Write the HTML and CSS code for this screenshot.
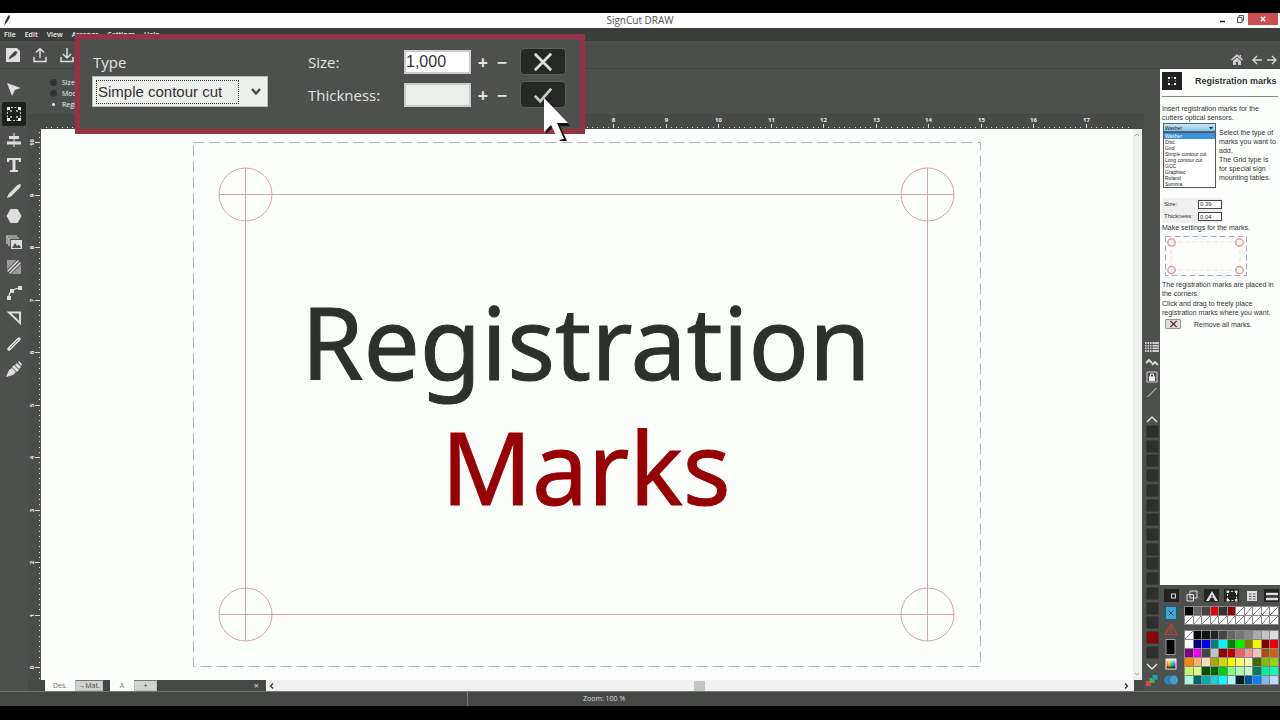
FILE: index.html
```html
<!DOCTYPE html>
<html lang="en">
<head>
<meta charset="utf-8">
<title>SignCut DRAW</title>
<link rel="stylesheet" href="styles.css">
</head>
<body>
<div class="app">
  <header class="titlebar">
    <svg class="logo" viewBox="0 0 10 12"><path d="M2 12L3 7L6 1L8 0L8 3L5 8L3 10Z" fill="#333"/></svg>
    <h1 class="title">SignCut DRAW</h1>
    <div class="window-buttons">
      <button class="win" aria-label="Minimize"><svg viewBox="0 0 10 10"><path d="M2 7.500H7" stroke="#222" stroke-width="1.500"/></svg></button>
      <button class="win" aria-label="Restore"><svg viewBox="0 0 10 10"><path d="M2.500 3.500H7V8.500H2.500ZM4 3.500V1.500H8.500V6.500H7" fill="none" stroke="#555"/></svg></button>
      <button class="win close" aria-label="Close"><svg viewBox="0 0 10 10"><path d="M2.800 2.800L7.200 7.200M7.200 2.800L2.800 7.200" stroke="#fff" stroke-width="1.300"/></svg></button>
    </div>
  </header>

  <nav class="menubar">
    <button>File</button><button>Edit</button><button>View</button><button>Arrange</button><button>Settings</button><button>Help</button>
  </nav>

  <div class="toolbar">
    <button aria-label="New"><svg viewBox="0 0 16 16"><path d="M1 1H12L15 4V15H1Z" fill="#ddd"/><path d="M3.500 12.500L5 9L10 4L12.500 5L11 8L6.500 11Z" fill="#444"/></svg></button>
    <button aria-label="Open"><svg viewBox="0 0 16 16"><path d="M2 10V14.500H14V10M8 11V1.500M4 5.500L8 1.500L12 5.500" fill="none" stroke="#ddd" stroke-width="1.500"/></svg></button>
    <button aria-label="Save"><svg viewBox="0 0 16 16"><path d="M2 10V14.500H14V10M8 1V11M4 7L8 11L12 7" fill="none" stroke="#ddd" stroke-width="1.500"/></svg></button>
    <div class="help-nav">
      <button aria-label="Home"><svg viewBox="0 0 12 12"><path d="M6 0L12 5.500L11 6.500L6 2.500L1 6.500L0 5.500ZM6 3.500L10 7V11H7V8H5V11H2V7ZM8.500 1H10V3.500L8.500 2Z" fill="#ccc"/></svg></button>
      <button aria-label="Back"><svg viewBox="0 0 12 12"><path d="M11 6H2M6 2L2 6L6 10" fill="none" stroke="#d5d5d5" stroke-width="1.400"/></svg></button>
      <button aria-label="Forward"><svg viewBox="0 0 12 12"><path d="M1 6H10M6 2L10 6L6 10" fill="none" stroke="#d5d5d5" stroke-width="1.400"/></svg></button>
    </div>
  </div>

  <main class="main">
    <div class="tools">
      <button aria-label="Select"><svg viewBox="0 0 16 16"><path d="M1 2L15 7L9 9L6 15Z" fill="#ddd"/></svg></button>
      <button class="active" aria-label="Registration marks"><svg viewBox="0 0 16 16"><rect x="1.500" y="1.500" width="13" height="13" fill="none" stroke="#ccc" stroke-dasharray="2 1.500"/><path d="M1 1H4V4H1ZM12 1H15V4H12ZM1 12H4V15H1ZM12 12H15V15H12Z" fill="#eee"/><path d="M4 4H6V6H4ZM10 4H12V6H10ZM4 10H6V12H4ZM10 10H12V12H10Z" fill="#999"/></svg></button>
      <button aria-label="Align"><svg viewBox="0 0 16 16"><path d="M3 4H13V7H3ZM1 9.500H15V12.500H1ZM7.500 1H8.500V15H7.500Z" fill="#ddd"/></svg></button>
      <button aria-label="Text"><svg viewBox="0 0 16 16"><path d="M1 1H15V5H13L12.500 3H9.500V13H12V15H4V13H6.500V3H3.500L3 5H1Z" fill="#ddd"/></svg></button>
      <button aria-label="Pencil"><svg viewBox="0 0 16 16"><path d="M1 15L2.500 11L11.500 2L14 1L15 2L14 4.500L5 13.500Z" fill="#ddd"/></svg></button>
      <button aria-label="Shape"><svg viewBox="0 0 16 16"><path d="M4.500 1H11.500L15.500 8L11.500 15H4.500L.5 8Z" fill="#ddd"/></svg></button>
      <button aria-label="Image"><svg viewBox="0 0 16 16"><path d="M1 10V2H11M3 12V4H13" fill="none" stroke="#ddd" stroke-width="1.200"/><rect x="5" y="6" width="11" height="9" fill="#ddd"/><path d="M6 14L9 9L11 12L13 10.500L15 14Z" fill="#4e504e"/></svg></button>
      <button aria-label="Fill"><svg viewBox="0 0 16 16"><path d="M1 1H13L1 13ZM15 3V15H3Z" fill="#999"/><path d="M2 14L14 2" stroke="#4e504e" stroke-width="6"/><path d="M2 12L12 2M4 14L14 4" stroke="#ddd" stroke-width="1.500" stroke-linecap="round"/></svg></button>
      <button aria-label="Nodes"><svg viewBox="0 0 16 16"><path d="M2.500 13Q3 4 14 3" fill="none" stroke="#ddd" stroke-width="1.200"/><path d="M1 11H5V15H1ZM4 4H8V8H4ZM12 1H16V5H12Z" fill="#ddd"/></svg></button>
      <button aria-label="Set square"><svg viewBox="0 0 16 16"><path d="M3 2.500H14V13Z" fill="none" stroke="#ddd" stroke-width="2"/></svg></button>
      <button aria-label="Line"><svg viewBox="0 0 16 16"><path d="M3 13L13 3" stroke="#ddd" stroke-width="3.500" stroke-linecap="round"/><path d="M4 12L12 4" stroke="#777"/></svg></button>
      <button aria-label="Eyedropper"><svg viewBox="0 0 16 16"><path d="M0 16L3 9L6 7L10 11L7 14ZM6 6L8 4L13 9L11 11ZM9 4L11 2L15 6L13 8ZM12 1L13 0L16 3L15 5Z" fill="#ddd"/></svg></button>
    </div>

    <section class="center">
      <fieldset class="options">
        <label><input type="radio" name="mode">Size</label>
        <label><input type="radio" name="mode">Mode</label>
        <label><input type="radio" name="mode" checked>Registration</label>
      </fieldset>
      <svg class="ruler-top" id="ruler-top"></svg>
      <div class="workspace">
        <svg class="ruler-left" id="ruler-left"></svg>
        <svg class="canvas">
          <rect class="page" x="152.500" y="13.500" width="787" height="524"/>
          <g class="marks">
            <path d="M178 65.500H913M178 485.500H913M204.500 39V512M886.500 39V512"/>
            <circle cx="204.500" cy="65.500" r="26.500"/><circle cx="886.500" cy="65.500" r="26.500"/>
            <circle cx="204.500" cy="485.500" r="26.500"/><circle cx="886.500" cy="485.500" r="26.500"/>
          </g>
          <text class="art"><tspan x="545" y="251">Registration</tspan><tspan class="red" x="545" y="376">Marks</tspan></text>
        </svg>
        <div class="vscroll"><svg viewBox="0 0 8 8"><path d="M2 5L4 3L6 5" fill="none" stroke="#aaa"/></svg><svg viewBox="0 0 8 8"><path d="M2 3L4 5L6 3" fill="none" stroke="#aaa"/></svg></div>
      </div>
      <div class="tabs">
        <button class="tab">Des.</button><button class="tab grey">→Mat.</button>
        <button class="tab sheet">A</button><button class="tab grey add">+</button>
        <button class="tab-close" aria-label="Close sheet">×</button>
        <div class="hscroll"><svg viewBox="0 0 8 8"><path d="M5 1.500L2.500 4L5 6.500" fill="none" stroke="#333" stroke-width="1.300"/></svg><span class="thumb"></span><svg viewBox="0 0 8 8"><path d="M3 1.500L5.500 4L3 6.500" fill="none" stroke="#333" stroke-width="1.300"/></svg></div>
      </div>
    </section>

    <aside class="strip">
      <div class="strip-icons">
        <svg viewBox="0 0 14 12"><path d="M0 1H14V11H0Z" fill="#ccc"/><path d="M0 3.500H14M0 6H14M0 8.500H14M2 1V11M4.500 1V11M7 1V11" stroke="#333" stroke-width=".7"/></svg>
        <svg viewBox="0 0 14 12"><path d="M1 7L4 4L7 7M7 9L10 6L13 9" fill="none" stroke="#ddd" stroke-width="1.800"/></svg>
        <svg viewBox="0 0 14 12"><rect x="2" y="1" width="10" height="10" fill="none" stroke="#ccc"/><path d="M4 5.500H10V10H4Z" fill="#eee"/><path d="M5.500 6V3H8.500V6" fill="none" stroke="#eee"/></svg>
        <svg viewBox="0 0 14 12"><path d="M2.500 11L11.500 2" stroke="#ddd"/></svg>
      </div>
      <svg class="chev" viewBox="0 0 14 10"><path d="M2 8L7 3L12 8" fill="none" stroke="#ddd" stroke-width="1.500"/></svg>
      <div class="layers" id="layers"></div>
      <svg class="chev" viewBox="0 0 14 10"><path d="M2 2L7 7L12 2" fill="none" stroke="#ddd" stroke-width="1.500"/></svg>
      <svg class="rgb" viewBox="0 0 14 14"><path d="M1 8H6V13H1Z" fill="#d64b3b"/><path d="M4.500 5H9.500V10H4.500Z" fill="#3fae55"/><path d="M7.500 2H12.500V7H7.500Z" fill="#2f9aa5"/></svg>
    </aside>

    <aside class="side">
      <article class="help">
        <header class="help-head">
          <svg viewBox="0 0 20 18"><path d="M0 0H20V18H0Z" fill="#222"/><path d="M6 5H8V7H6ZM12 5H14V7H12ZM6 11H8V13H6ZM12 11H14V13H12Z" fill="#eee"/><path d="M9 5.500H11M9 12.500H11M6.500 8V10M13.500 8V10" stroke="#666"/></svg>
          <h2>Registration marks</h2>
        </header>
        <p>Insert registration marks for the cutters optical sensors.</p>
        <div class="type-row">
          <div class="picker">
            <div class="picker-box">
              <select aria-label="Mark type"><option>Washer</option></select>
              <svg viewBox="0 0 6 6"><path d="M1 2H5L3 4.500Z" fill="#123"/></svg>
            </div>
            <ul><li class="on">Washer</li><li>Disc</li><li>Grid</li><li>Simple contour cut</li><li>Long contour cut</li><li>GCC</li><li>Graphtec</li><li>Roland</li><li>Summa</li></ul>
          </div>
          <p>Select the type of marks you want to add.<br>The Grid type is for special sign mounting tables.</p>
        </div>
        <div class="dims">
          <label for="hs">Size:</label><input id="hs" value="0.39">
          <label for="ht">Thickness:</label><input id="ht" value="0.04">
        </div>
        <p>Make settings for the marks.</p>
        <svg class="sketch" viewBox="0 0 84 42"><rect x="1.500" y="1.500" width="81" height="39" fill="none" stroke="#a5a5dc" stroke-dasharray="6 3"/><rect x="7" y="7" width="69" height="28" fill="none" stroke="#efe2e0" stroke-dasharray="5 2"/><g fill="none" stroke="#ec8b92" stroke-width="1.300"><circle cx="7.500" cy="7.500" r="3.700"/><circle cx="75.500" cy="7.500" r="3.700"/><circle cx="7.500" cy="35" r="3.700"/><circle cx="75.500" cy="35" r="3.700"/></g></svg>
        <p>The registration marks are placed in the corners.</p>
        <p class="drag">Click and drag to freely place registration marks where you want.</p>
        <div class="remove"><button aria-label="Remove"><svg viewBox="0 0 10 8"><path d="M1.500 .5L8.500 7.500M8.500 .5L1.500 7.500" stroke="#5a1020" stroke-width="1.300"/></svg></button><span>Remove all marks.</span></div>
      </article>

      <section class="palette">
        <div class="pal-head">
          <button class="dark" aria-label="Outline"><svg viewBox="0 0 14 12"><rect x="6.500" y="4" width="4" height="4" fill="none" stroke="#ddd"/></svg></button>
          <button aria-label="Overlap"><svg viewBox="0 0 14 12"><path d="M2 4.500H8.500V11H2ZM5 1H12V8H5Z" fill="none" stroke="#ddd"/></svg></button>
          <button class="dark" aria-label="Snap"><svg viewBox="0 0 14 12"><path d="M7 1L8.500 3.500L13 11H10L8.500 8H5.500L4 11H1L5.500 3.500Z" fill="#ddd"/><path d="M7 5V12" stroke="#222"/></svg></button>
          <button class="dark" aria-label="Marks"><svg viewBox="0 0 14 12"><rect x="2.500" y="1.500" width="9" height="9" fill="none" stroke="#ddd" stroke-dasharray="2 1.500"/><path d="M1.500 .5H4V3H1.500ZM10 .5H12.500V3H10ZM1.500 9H4V11.500H1.500ZM10 9H12.500V11.500H10Z" fill="#ddd"/></svg></button>
          <button aria-label="Grid"><svg viewBox="0 0 14 12"><path d="M2 1H12V11H2Z" fill="#ddd"/><path d="M4 4H6.500M8 4H10.500M4 6.500H6.500M8 6.500H10.500M4 9H6.500M8 9H10.500" stroke="#555"/></svg></button>
          <button class="dark" aria-label="Lines"><svg viewBox="0 0 14 12"><path d="M1 4H13M1 9H13" stroke="#ddd" stroke-width="2.500"/><path d="M2 7H13" stroke="#999" stroke-dasharray="1 2"/></svg></button>
        </div>
        <div class="pal-body">
          <div class="pal-tools">
            <svg viewBox="0 0 14 14"><path d="M0 0H14V14H0Z" fill="#245a70"/><path d="M2 1H12V13H2Z" fill="#3aa6cf"/><path d="M4.500 4.500L9.500 9.500M9.500 4.500L4.500 9.500" stroke="#17495c"/></svg>
            <svg viewBox="0 0 14 14"><path d="M7 2L13 12.500H1Z" fill="none" stroke="#c8402c" stroke-width="1.200"/><path d="M7 5V9M7 10V11.500" stroke="#c8402c"/></svg>
            <svg class="tall" viewBox="0 0 14 16"><rect x="2" y=".5" width="9" height="15" fill="#000" stroke="#999"/></svg>
            <svg viewBox="0 0 14 14"><defs><linearGradient id="hue"><stop offset="0" stop-color="#e33"/><stop offset=".3" stop-color="#ec3"/><stop offset=".55" stop-color="#3c4"/><stop offset=".8" stop-color="#38f"/><stop offset="1" stop-color="#c3c"/></linearGradient><linearGradient id="shade" x2="0" y2="1"><stop offset="0" stop-color="#fff"/><stop offset=".5" stop-color="#fff" stop-opacity="0"/><stop offset=".6" stop-color="#000" stop-opacity="0"/><stop offset="1" stop-color="#000"/></linearGradient></defs><rect x="2" y="2" width="10" height="10" fill="url(#hue)"/><rect x="2" y="2" width="10" height="10" fill="url(#shade)" stroke="#eee"/></svg>
            <svg viewBox="0 0 14 14"><ellipse cx="5" cy="7" rx="5" ry="4.500" fill="#2c7fae"/><ellipse cx="10" cy="7" rx="4" ry="4.500" fill="#439bcb"/></svg>
          </div>
          <div class="swatches">
            <div class="grid" id="recent"></div>
            <div class="grid" id="colors"></div>
          </div>
        </div>
      </section>
    </aside>
  </main>

  <footer class="status"><span class="status-left"></span><span>Zoom: 100 %</span></footer>

  <form class="popup">
    <div class="type">
      <label for="type">Type</label>
      <div class="combo">
        <select id="type"><option>Simple contour cut</option></select>
        <svg viewBox="0 0 12 10"><path d="M2 2L6 6.500L10 2" fill="none" stroke="#444" stroke-width="2.200"/></svg>
      </div>
    </div>
    <div class="fields">
      <label for="size">Size:</label><input id="size" value="1,000">
      <button type="button" class="step">+</button><button type="button" class="step">−</button>
      <button type="button" class="act" aria-label="Cancel"><svg viewBox="0 0 22 22"><path d="M2 2L20 20M20 2L2 20" stroke="#ddd" stroke-width="3"/></svg></button>
      <label for="thick">Thickness:</label><input id="thick" class="off" value="">
      <button type="button" class="step">+</button><button type="button" class="step">−</button>
      <button type="button" class="act" aria-label="Apply"><svg viewBox="0 0 22 22"><path d="M2 12L8 18L20 4" fill="none" stroke="#ccc" stroke-width="3"/></svg></button>
    </div>
  </form>
  <svg class="cursor" viewBox="0 0 28 46"><path d="M3 3V37L10 30L17 44H24L17 29H27Z" fill="#111"/><path d="M1 1V35L8 28L15 43L21 42L14 26H25Z" fill="#fff"/></svg>
</div>
<script src="app.js"></script>
</body>
</html>
```
FILE: styles.css
```css
* { box-sizing: border-box; }
body { margin: 0; background: #000; font-family: "Open Sans", "Noto Sans", sans-serif; color: #ddd; }
button { font: inherit; color: inherit; background: none; border: 0; padding: 0; display: flex; align-items: center; justify-content: center; }
svg { display: block; }
h1, h2, p, ul { margin: 0; padding: 0; font-weight: normal; }
ul { list-style: none; }

.app { position: relative; height: 100vh; min-height: 720px; padding: 13px 0 14px; display: flex; flex-direction: column; overflow: hidden; }

.titlebar { height: 15px; flex: none; background: #fcfcfc; display: grid; grid-template-columns: 1fr auto 1fr; align-items: center; }
.logo { width: 10px; height: 11px; margin-left: 2px; }
.title { font-size: 10px; line-height: 15px; color: #555; }
.window-buttons { display: flex; justify-content: flex-end; align-self: start; padding-right: 2px; }
.win { width: 17px; height: 12px; }
.win svg { width: 10px; height: 10px; }
.close { width: 30px; background: #c94f50; }

.menubar { height: 13px; flex: none; background: #3c3e3c; display: flex; gap: 9px; padding-left: 4px; font-size: 7px; font-weight: 600; color: #eee; }

.toolbar { height: 28px; flex: none; background: #4c4e4c; border-bottom: 1px solid #434543; display: flex; align-items: center; gap: 11px; padding: 1px 0 0 5px; }
.toolbar svg { width: 16px; height: 16px; }
.help-nav { margin-left: auto; align-self: end; display: flex; gap: 3px; padding: 0 2px 2px 0; }
.toolbar .help-nav svg { width: 12px; height: 12px; }
.help-nav button:first-child { margin-right: 5px; }

.main { flex: 1; min-height: 0; display: flex; background: #4e504e; }
.tools { width: 28px; height: 312px; flex: none; padding-top: 8px; display: flex; flex-direction: column; justify-content: space-between; }
.tools button { width: 24px; height: 24px; margin-left: 2px; border-radius: 2px; }
.tools .active { background: #1e201e; }
.tools svg { width: 16px; height: 16px; }

.center { flex: 1; min-width: 0; display: flex; flex-direction: column; }
.options { height: 46px; flex: none; margin: 0; border: 0; border-bottom: 1px solid #454745; padding: 8px 0 0 22px; font-size: 7px; line-height: 11px; color: #eee; }
.options label { display: flex; align-items: center; gap: 5px; height: 11px; }
.options input { appearance: none; width: 7px; height: 7px; margin: 0; border-radius: 50%; background: #333533; }
.options input:checked { background: #eee; border: 2px solid #4e504e; }
.ruler-top { width: 100%; height: 14px; flex: none; background: #484a48; }
.ruler-left { width: 13px; height: 100%; flex: none; background: #4b4d4b; }
.ruler-text { font-size: 6px; font-weight: 700; fill: #eee; text-anchor: middle; }
.ticks { stroke: #ddd; stroke-width: 1; }
.workspace { flex: 1; min-height: 0; display: flex; padding-right: 2px; }
.canvas { flex: 1; min-width: 0; height: 100%; background: #fcfefb; }
.page { fill: none; stroke: #b4b4c2; stroke-dasharray: 11 5; }
.marks { fill: none; stroke: #d6a5a0; stroke-width: 1; }
.art { font-family: "Noto Sans", sans-serif; font-size: 100px; text-anchor: middle; fill: #2e302e; stroke: #2e302e; stroke-width: 1; }
.art .red { fill: #950004; stroke: #950004; }
.vscroll { width: 9px; background: #ecefec; display: flex; flex-direction: column; justify-content: space-between; padding: 2px 0; }
.vscroll svg { width: 8px; height: 8px; }

.tabs { height: 11px; flex: none; display: flex; padding: 0 10px 0 17px; background: #464846; font-size: 7px; color: #777; }
.tab { width: 30px; background: #fcfefb; }
.tab.grey { width: 28px; background: #d2d4d2; border: 1px solid #bbb; border-top-color: #777; color: #444; }
.tab.sheet { width: 24px; margin-left: 7px; }
.tab.add { width: 23px; }
.tab-close { width: 109px; justify-content: flex-end; padding-right: 7px; color: #ddd; font-size: 9px; }
.hscroll { flex: 1; background: #f0f1f0; display: flex; align-items: center; justify-content: space-between; padding: 0 4px 0 2px; }
.hscroll svg { width: 8px; height: 8px; }
.thumb { width: 11px; height: 10px; background: #c4c6c4; }

.strip { width: 16px; flex: none; padding: 0 1px 4px; display: flex; flex-direction: column; align-items: center; justify-content: flex-end; }
.strip-icons { display: flex; flex-direction: column; gap: 3px; margin-bottom: 16px; }
.strip-icons svg { width: 14px; height: 12px; }
.chev { width: 14px; height: 10px; }
.layers { height: 234px; display: flex; flex-direction: column; justify-content: space-between; margin: 1px 0 3px; }
.layer { width: 13px; height: 13px; background: #2e302e; border: 1px solid #3a3c3a; border-radius: 2px; }
.layer.red { background: #8d0006; }
.rgb { width: 14px; height: 14px; margin-top: 1px; }

.side { width: 120px; flex: none; display: flex; flex-direction: column; }
.help { flex: 1; background: #fcfefb; color: #333; padding: 2px 0 0 2px; font: 7px/9px "Liberation Sans", sans-serif; }
.help-head { display: flex; align-items: center; gap: 13px; height: 26px; padding-bottom: 6px; border-bottom: 1px solid #888; margin: 0 2px 7px 0; }
.help-head svg { width: 20px; height: 18px; flex: none; }
.help-head h2 { font: bold 9px/12px "Liberation Sans", sans-serif; color: #333; white-space: nowrap; }
.type-row { display: flex; gap: 3px; height: 75px; margin-top: 1px; }
.type-row p { padding: 5px 4px 0 0; flex: 1; }
.picker { width: 54px; flex: none; font-size: 5px; line-height: 6px; color: #222; padding-left: 1px; }
.picker-box { display: flex; align-items: center; width: 53px; height: 9px; border: 1px solid #356a94; background: linear-gradient(#cfe6f4, #8fc1e2); padding-right: 1px; }
.picker-box svg { width: 6px; height: 6px; }
.picker select { appearance: none; flex: 1; min-width: 0; height: 7px; border: 0; background: none; font: inherit; padding: 0 1px; color: #222; }
.picker ul { border: 1px solid #555; background: #fff; width: 53px; height: 56px; }
.picker li { height: 6px; padding-left: 1px; white-space: nowrap; line-height: 6px; }
.picker .on { background: #3b92dd; color: #fff; }
.dims { display: grid; grid-template-columns: 32px 24px; align-items: center; gap: 2px; width: 61px; height: 25px; background: #eff0ef; padding: 1px 2px; font-size: 6px; }
.dims input { width: 24px; height: 9px; border: 1px solid #444; background: #fff; padding: 0 1px; font: 6px "Liberation Sans", sans-serif; color: #333; }
.sketch { width: 84px; height: 42px; margin: 3px 0 3px 2px; }
.help .drag { margin-top: 1px; }
.remove { display: flex; align-items: center; gap: 13px; margin: 2px 0 0 3px; }
.remove button { width: 16px; height: 10px; background: #ddd; border: 1px solid #999; border-radius: 1px; }
.remove svg { width: 9px; height: 8px; }

.palette { height: 106px; flex: none; padding: 4px 1px 0 4px; }
.pal-head { display: flex; justify-content: space-between; height: 14px; }
.pal-head button { width: 15px; height: 13px; }
.pal-head svg { width: 14px; height: 12px; }
.pal-head .dark { background: #222422; }
.pal-body { display: flex; gap: 6px; margin-top: 3px; }
.pal-tools { width: 14px; height: 81px; display: flex; flex-direction: column; justify-content: space-between; }
.pal-tools svg { width: 14px; height: 14px; }
.pal-tools .tall { height: 16px; }
.swatches { flex: 1; display: flex; flex-direction: column; gap: 5px; }
.grid { display: grid; grid-template-columns: repeat(11, 1fr); gap: 1px; background: #888; border: 1px solid #888; }
.swatch { height: 8px; }
.swatch.none { background: linear-gradient(to bottom right, #fff 44%, #777 50%, #fff 56%); }

.status { height: 15px; flex: none; background: #464846; border-top: 1px solid #777; display: grid; grid-template-columns: 468px auto; justify-content: start; column-gap: 115px; font-size: 7px; line-height: 14px; color: #ddd; }
.status-left { border-right: 1px solid #777; }

.popup { position: absolute; left: 75px; top: 34px; width: 510px; height: 100px; background: #4e504d; border: 5px solid #983242; padding: 9px 12px; display: flex; gap: 40px; font: 15px/24px "Open Sans", sans-serif; color: #e4e4e4; }
.type { width: 176px; display: flex; flex-direction: column; gap: 2px; }
.type label { line-height: 24px; padding: 2px 0 0 1px; }
.combo { display: flex; align-items: center; height: 31px; background: #eef0ee; border: 1px solid #bbb; padding: 2px 5px 2px 3px; gap: 11px; }
.combo select { appearance: none; flex: 1; min-width: 0; height: 24px; padding: 0 1px; border: 1px dotted #333; background: none; font: 15px "Liberation Sans", sans-serif; color: #333; }
.combo svg { width: 12px; height: 10px; }
.fields { display: grid; grid-template-columns: 95px 67px 18px 18px 46px; grid-auto-rows: 27px; row-gap: 6px; align-items: center; column-gap: 1px; align-content: start; }
.fields input { width: 67px; height: 24px; border: 2px solid #ccc; background: #fff; padding: 0; font: 16px "Liberation Sans", sans-serif; color: #333; }
.fields .off { background: #eceeec; }
.step { font-size: 18px; font-weight: 700; line-height: 20px; padding-left: 4px; }
.act { width: 46px; height: 27px; margin-left: 10px; background: #262826; border: 1px solid #5e605e; border-radius: 4px; }
.act svg { width: 20px; height: 20px; }
.cursor { position: absolute; left: 543px; top: 97px; width: 28px; height: 46px; }
```
FILE: app.js
```js
const NS = "http://www.w3.org/2000/svg";
const UNIT = 52.5;

function add(parent, name, attrs, text) {
  const el = document.createElementNS(NS, name);
  for (const key in attrs) el.setAttribute(key, attrs[key]);
  if (text !== undefined) el.textContent = text;
  parent.appendChild(el);
}

// Horizontal ruler: zero lies 165px from the ruler's left end.
const rulerTop = document.getElementById("ruler-top");
let d = "";
for (let i = -28; i <= 178; i++) {
  const x = Math.round(165 + i * UNIT / 10) + 0.5;
  d += `M${x} ${i % 10 === 0 ? 9 : 12}V13`;
  if (i % 10 === 0) add(rulerTop, "text", { x, y: 7, class: "ruler-text" }, Math.abs(i / 10));
}
add(rulerTop, "path", { d, class: "ticks" });

// Vertical ruler: zero lies 538px below its top end.
const rulerLeft = document.getElementById("ruler-left");
d = "";
for (let i = -2; i <= 102; i++) {
  const y = Math.round(538 - i * UNIT / 10) + 0.5;
  d += `M${i % 10 === 0 ? 7 : 11} ${y}H12`;
  if (i % 10 === 0) add(rulerLeft, "text", { transform: `translate(6 ${y}) rotate(-90)`, class: "ruler-text" }, i / 10);
}
add(rulerLeft, "path", { d, class: "ticks" });

const layers = document.getElementById("layers");
for (let i = 0; i < 16; i++) {
  const b = document.createElement("button");
  b.className = i === 14 ? "layer red" : "layer";
  b.setAttribute("aria-label", "Layer " + (i + 1));
  layers.appendChild(b);
}

function fill(id, list) {
  const grid = document.getElementById(id);
  for (const c of list.split(" ")) {
    const s = document.createElement("button");
    s.className = "swatch";
    s.setAttribute("aria-label", c === "-" ? "No colour" : "#" + c);
    if (c === "-") s.classList.add("none");
    else s.style.background = "#" + c;
    grid.appendChild(s);
  }
}
fill("recent", "000 666 444 e3000b 333 8d0006 - - - - - - - - - - - - - - - -");
fill("colors", [
  "- 000 111 222 444 666 777 888 aaa c4c4c4 ddd",
  "fff 000080 0000f0 008080 00f8f8 008000 00f000 808000 f8f800 800000 e80010",
  "800080 f000f0 444 c4c4c4 900008 c00008 e86464 f09898 f4c0c0 b04c10 c86414",
  "f88810 f8b070 f8dcb8 a8a808 d4d410 f8f800 f8f878 f8f8b8 406808 88b808 98d010",
  "c8f868 d8f888 005000 006800 00d000 88f888 b0f8b0 c8f8c8 008058 00f098 10f8b8",
  "a8f8e0 006868 10a8a8 18d0d0 10f8f8 b0f8f8 002028 0050a0 1080f0 80b8f0 c0d8f8"
].join(" "));
```
